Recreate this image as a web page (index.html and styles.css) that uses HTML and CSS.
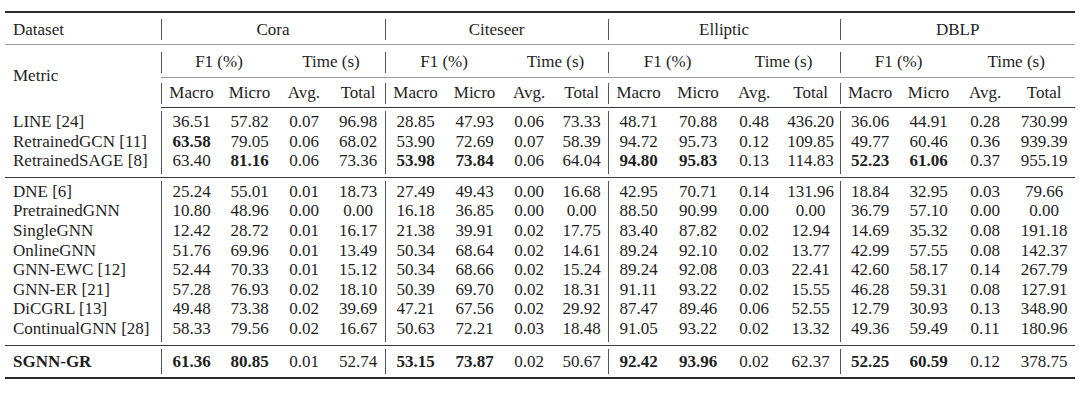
FILE: index.html
```html
<!DOCTYPE html>
<html>
<head>
<meta charset="utf-8">
<link rel="stylesheet" href="styles.css">
</head>
<body>
<table class="tbl">
  <colgroup>
    <col class="w156">
    <col class="w61"><col class="w55"><col class="w54"><col class="w54">
    <col class="w61"><col class="w57"><col class="w52"><col class="w53">
    <col class="w61"><col class="w58"><col class="w54"><col class="w59">
    <col class="w60"><col class="w57"><col class="w56"><col class="w62">
  </colgroup>
  <thead>
    <tr class="h1">
      <th class="name">Dataset</th>
      <th class="v" colspan="4">Cora</th>
      <th class="v" colspan="4">Citeseer</th>
      <th class="v" colspan="4">Elliptic</th>
      <th class="v" colspan="4">DBLP</th>
    </tr>
    <tr class="h2">
      <th class="name metric" rowspan="2">Metric</th>
      <th class="v" colspan="2">F1 (%)</th><th colspan="2">Time (s)</th>
      <th class="v" colspan="2">F1 (%)</th><th colspan="2">Time (s)</th>
      <th class="v" colspan="2">F1 (%)</th><th colspan="2">Time (s)</th>
      <th class="v" colspan="2">F1 (%)</th><th colspan="2">Time (s)</th>
    </tr>
    <tr class="h3">
      <th class="v">Macro</th><th>Micro</th><th>Avg.</th><th>Total</th>
      <th class="v">Macro</th><th>Micro</th><th>Avg.</th><th>Total</th>
      <th class="v">Macro</th><th>Micro</th><th>Avg.</th><th>Total</th>
      <th class="v">Macro</th><th>Micro</th><th>Avg.</th><th>Total</th>
    </tr>
  </thead>
  <tbody class="sec">
    <tr class="first">
      <td class="name">LINE [24]</td>
      <td class="v">36.51</td><td>57.82</td><td>0.07</td><td>96.98</td>
      <td class="v">28.85</td><td>47.93</td><td>0.06</td><td>73.33</td>
      <td class="v">48.71</td><td>70.88</td><td>0.48</td><td>436.20</td>
      <td class="v">36.06</td><td>44.91</td><td>0.28</td><td>730.99</td>
    </tr>
    <tr>
      <td class="name">RetrainedGCN [11]</td>
      <td class="v b">63.58</td><td>79.05</td><td>0.06</td><td>68.02</td>
      <td class="v">53.90</td><td>72.69</td><td>0.07</td><td>58.39</td>
      <td class="v">94.72</td><td>95.73</td><td>0.12</td><td>109.85</td>
      <td class="v">49.77</td><td>60.46</td><td>0.36</td><td>939.39</td>
    </tr>
    <tr class="last">
      <td class="name">RetrainedSAGE [8]</td>
      <td class="v">63.40</td><td class="b">81.16</td><td>0.06</td><td>73.36</td>
      <td class="v b">53.98</td><td class="b">73.84</td><td>0.06</td><td>64.04</td>
      <td class="v b">94.80</td><td class="b">95.83</td><td>0.13</td><td>114.83</td>
      <td class="v b">52.23</td><td class="b">61.06</td><td>0.37</td><td>955.19</td>
    </tr>
  </tbody>
  <tbody class="sec">
    <tr class="first">
      <td class="name">DNE [6]</td>
      <td class="v">25.24</td><td>55.01</td><td>0.01</td><td>18.73</td>
      <td class="v">27.49</td><td>49.43</td><td>0.00</td><td>16.68</td>
      <td class="v">42.95</td><td>70.71</td><td>0.14</td><td>131.96</td>
      <td class="v">18.84</td><td>32.95</td><td>0.03</td><td>79.66</td>
    </tr>
    <tr>
      <td class="name">PretrainedGNN</td>
      <td class="v">10.80</td><td>48.96</td><td>0.00</td><td>0.00</td>
      <td class="v">16.18</td><td>36.85</td><td>0.00</td><td>0.00</td>
      <td class="v">88.50</td><td>90.99</td><td>0.00</td><td>0.00</td>
      <td class="v">36.79</td><td>57.10</td><td>0.00</td><td>0.00</td>
    </tr>
    <tr>
      <td class="name">SingleGNN</td>
      <td class="v">12.42</td><td>28.72</td><td>0.01</td><td>16.17</td>
      <td class="v">21.38</td><td>39.91</td><td>0.02</td><td>17.75</td>
      <td class="v">83.40</td><td>87.82</td><td>0.02</td><td>12.94</td>
      <td class="v">14.69</td><td>35.32</td><td>0.08</td><td>191.18</td>
    </tr>
    <tr>
      <td class="name">OnlineGNN</td>
      <td class="v">51.76</td><td>69.96</td><td>0.01</td><td>13.49</td>
      <td class="v">50.34</td><td>68.64</td><td>0.02</td><td>14.61</td>
      <td class="v">89.24</td><td>92.10</td><td>0.02</td><td>13.77</td>
      <td class="v">42.99</td><td>57.55</td><td>0.08</td><td>142.37</td>
    </tr>
    <tr>
      <td class="name">GNN-EWC [12]</td>
      <td class="v">52.44</td><td>70.33</td><td>0.01</td><td>15.12</td>
      <td class="v">50.34</td><td>68.66</td><td>0.02</td><td>15.24</td>
      <td class="v">89.24</td><td>92.08</td><td>0.03</td><td>22.41</td>
      <td class="v">42.60</td><td>58.17</td><td>0.14</td><td>267.79</td>
    </tr>
    <tr>
      <td class="name">GNN-ER [21]</td>
      <td class="v">57.28</td><td>76.93</td><td>0.02</td><td>18.10</td>
      <td class="v">50.39</td><td>69.70</td><td>0.02</td><td>18.31</td>
      <td class="v">91.11</td><td>93.22</td><td>0.02</td><td>15.55</td>
      <td class="v">46.28</td><td>59.31</td><td>0.08</td><td>127.91</td>
    </tr>
    <tr>
      <td class="name">DiCGRL [13]</td>
      <td class="v">49.48</td><td>73.38</td><td>0.02</td><td>39.69</td>
      <td class="v">47.21</td><td>67.56</td><td>0.02</td><td>29.92</td>
      <td class="v">87.47</td><td>89.46</td><td>0.06</td><td>52.55</td>
      <td class="v">12.79</td><td>30.93</td><td>0.13</td><td>348.90</td>
    </tr>
    <tr class="last">
      <td class="name">ContinualGNN [28]</td>
      <td class="v">58.33</td><td>79.56</td><td>0.02</td><td>16.67</td>
      <td class="v">50.63</td><td>72.21</td><td>0.03</td><td>18.48</td>
      <td class="v">91.05</td><td>93.22</td><td>0.02</td><td>13.32</td>
      <td class="v">49.36</td><td>59.49</td><td>0.11</td><td>180.96</td>
    </tr>
  </tbody>
  <tbody class="sec final">
    <tr class="first last">
      <td class="name b">SGNN-GR</td>
      <td class="v b">61.36</td><td class="b">80.85</td><td>0.01</td><td>52.74</td>
      <td class="v b">53.15</td><td class="b">73.87</td><td>0.02</td><td>50.67</td>
      <td class="v b">92.42</td><td class="b">93.96</td><td>0.02</td><td>62.37</td>
      <td class="v b">52.25</td><td class="b">60.59</td><td>0.12</td><td>378.75</td>
    </tr>
  </tbody>
</table>
</body>
</html>
```

FILE: styles.css
```css
html, body {
  margin: 0;
  padding: 0;
  background: #ffffff;
}

.tbl {
  margin: 11px 0 0 5px;
  width: 1070px;
  table-layout: fixed;
  border-collapse: collapse;
  font-family: "Liberation Serif", "Times New Roman", serif;
  font-size: 17px;
  color: #1e1e1e;
  border-top: 2px solid #2a2a2a;
  border-bottom: 2px solid #2a2a2a;
}

.w156 { width: 156px; }
.w52 { width: 52px; }
.w53 { width: 53px; }
.w54 { width: 54px; }
.w55 { width: 55px; }
.w56 { width: 56px; }
.w57 { width: 57px; }
.w58 { width: 58px; }
.w59 { width: 59px; }
.w60 { width: 60px; }
.w61 { width: 61px; }
.w62 { width: 62px; }

th, td {
  padding: 0;
  text-align: center;
  white-space: nowrap;
  font-weight: normal;
  background-repeat: no-repeat;
}

.name {
  text-align: left;
  padding-left: 8px;
}

.b { font-weight: bold; }

/* header rows */
thead th {
  line-height: 20px;
  height: 20px;
  vertical-align: top;
}

.h1 th {
  padding-top: 7px;
  padding-bottom: 4px;
  border-bottom: 1px solid #9a9a9a;
}

.h2 th {
  padding-top: 7px;
  padding-bottom: 5px;
  border-bottom: 1px solid #9a9a9a;
}

.h2 th.metric {
  border-bottom: none;
  padding-top: 0;
  padding-bottom: 0;
  vertical-align: middle;
}

.h3 th {
  padding-top: 5px;
  padding-bottom: 4px;
  border-bottom: 1px solid #3a3a3a;
}

thead th.v {
  background-image: linear-gradient(#555555, #555555);
  background-size: 1px 21px;
  background-position: 0 60%;
}

/* body sections */
tbody td {
  line-height: 19.6px;
  height: 19.6px;
  vertical-align: top;
}

.sec {
  border-bottom: 1px solid #3a3a3a;
}

.sec.final {
  border-bottom: none;
}

.sec tr.first td {
  padding-top: 4px;
}

.sec tr.last td {
  padding-bottom: 6px;
}

.final tr.first td {
  padding-top: 6px;
  padding-bottom: 6px;
}

tbody td.v {
  background-image: linear-gradient(#555555, #555555);
  background-size: 1px 100%;
  background-position: 0 0;
}

tbody tr.first td.v {
  background-size: 1px calc(100% - 3px);
  background-position: 0 100%;
}

tbody tr.last td.v {
  background-size: 1px calc(100% - 3px);
  background-position: 0 0;
}

tbody tr.first.last td.v {
  background-size: 1px calc(100% - 6px);
  background-position: 0 50%;
}
```
